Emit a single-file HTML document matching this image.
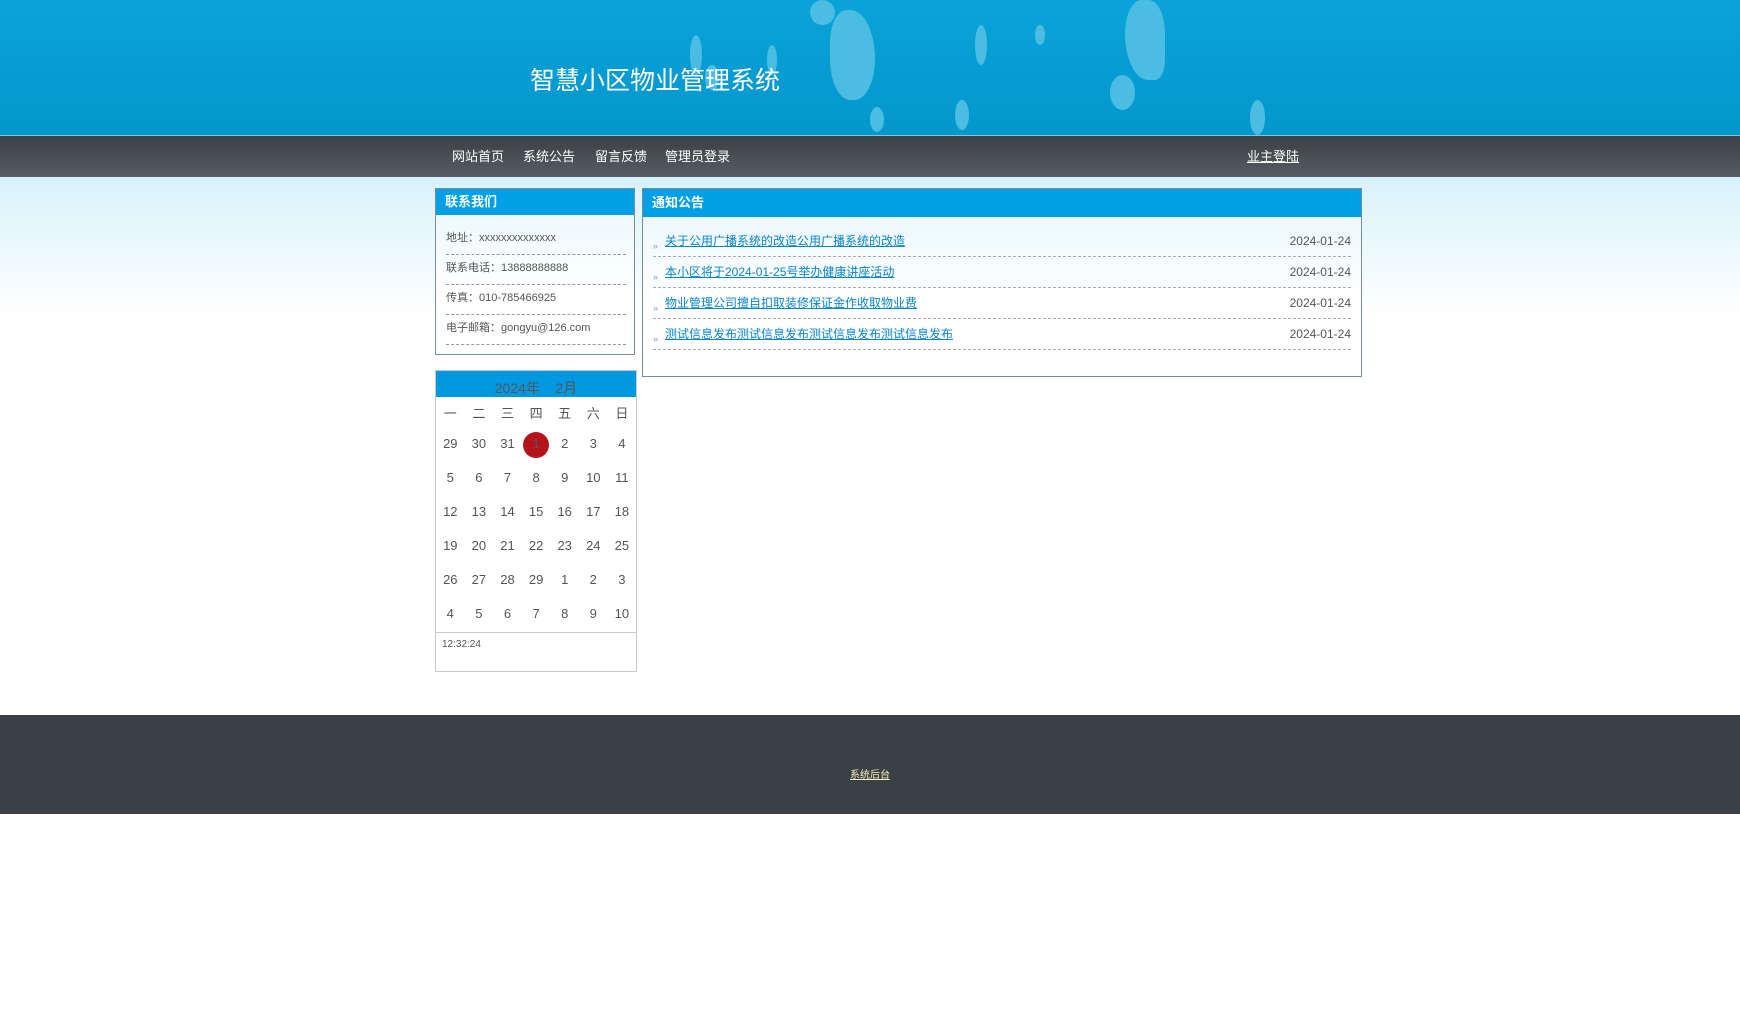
<!DOCTYPE html>
<html><head><meta charset="utf-8"><style>
*{margin:0;padding:0;box-sizing:border-box}
body{width:1740px;height:1020px;position:relative;background:#fff;font-family:"Liberation Sans","Noto Sans CJK SC",sans-serif;overflow:hidden}
.a{position:absolute}
#hd{left:0;top:0;width:1740px;height:135px;background:linear-gradient(#0aa3d8,#0497cc);overflow:hidden}
.blob{position:absolute;background:#4bbde2;border-radius:50%}
#title{left:530px;top:61px;font-size:25px;color:#fff;white-space:nowrap}
#nav{left:0;top:135px;width:1740px;height:42px;background:linear-gradient(#3b4045,#575c62);border-top:1px solid #7cc6e0}
.nv{top:10px;font-size:13px;color:#fff}
#bg{left:0;top:177px;width:1740px;height:140px;background:linear-gradient(#d8f2fb,#fff)}
.box{border:1px solid #7a8a99;background:linear-gradient(#e6f7fd,#fff 60%)}
.bh{background:#00a0e6;color:#fff;font-size:13px;font-weight:bold;padding-left:9px}
.ci{left:10px;width:180px;font-size:11px;color:#555;border-bottom:1px dashed #999;height:30px;line-height:26px}
.nr{left:10px;width:698px;height:31px;border-bottom:1px dashed #aaa;font-size:12px;line-height:20px}
.nr a{color:#0a84c9;text-decoration:underline;position:absolute;left:12px;top:5px}
.nr i{position:absolute;left:0;top:10px;font-style:normal;color:#9a8fc0;font-size:9px}
.nr span{position:absolute;right:0;top:5px;color:#555}
#cal{left:435px;top:370px;width:202px;height:302px;border:1px solid #c8c8c8;background:#fff}
.cd{width:28.6px;text-align:center;font-size:13px;color:#555;position:absolute}
#ft{left:0;top:715px;width:1740px;height:99px;background:#3b4045}
</style></head><body>
<div id="hd" class="a">
<div class="blob" style="left:830px;top:10px;width:45px;height:90px;border-radius:40% 60% 50% 50%"></div>
<div class="blob" style="left:810px;top:0;width:25px;height:25px"></div>
<div class="blob" style="left:1125px;top:0;width:40px;height:80px;border-radius:50% 50% 30% 70%"></div>
<div class="blob" style="left:1110px;top:75px;width:25px;height:35px"></div>
<div class="blob" style="left:975px;top:25px;width:12px;height:40px"></div>
<div class="blob" style="left:690px;top:35px;width:12px;height:40px"></div>
<div class="blob" style="left:705px;top:65px;width:14px;height:25px"></div>
<div class="blob" style="left:767px;top:45px;width:10px;height:30px"></div>
<div class="blob" style="left:870px;top:107px;width:14px;height:25px"></div>
<div class="blob" style="left:955px;top:100px;width:14px;height:30px"></div>
<div class="blob" style="left:1035px;top:25px;width:10px;height:20px"></div>
<div class="blob" style="left:1250px;top:100px;width:15px;height:35px"></div>
</div>
<div id="title" class="a">智慧小区物业管理系统</div>
<div id="nav" class="a">
<div class="a nv" style="left:452px">网站首页</div>
<div class="a nv" style="left:523px">系统公告</div>
<div class="a nv" style="left:595px">留言反馈</div>
<div class="a nv" style="left:665px">管理员登录</div>
<div class="a nv" style="left:1247px;text-decoration:underline">业主登陆</div>
</div>
<div id="bg" class="a"></div>

<div class="a box" style="left:435px;top:188px;width:200px;height:167px">
<div class="bh" style="height:26px;line-height:25px">联系我们</div>
<div class="a ci" style="top:36px">地址：xxxxxxxxxxxxxx</div>
<div class="a ci" style="top:66px">联系电话：13888888888</div>
<div class="a ci" style="top:96px">传真：010-785466925</div>
<div class="a ci" style="top:126px">电子邮箱：gongyu@126.com</div>
</div>

<div class="a box" style="left:642px;top:188px;width:720px;height:189px">
<div class="bh" style="height:28px;line-height:27px">通知公告</div>
<div class="a nr" style="top:37px"><i>»</i><a>关于公用广播系统的改造公用广播系统的改造</a><span>2024-01-24</span></div>
<div class="a nr" style="top:68px"><i>»</i><a>本小区将于2024-01-25号举办健康讲座活动</a><span>2024-01-24</span></div>
<div class="a nr" style="top:99px"><i>»</i><a>物业管理公司擅自扣取装修保证金作收取物业费</a><span>2024-01-24</span></div>
<div class="a nr" style="top:130px"><i>»</i><a>测试信息发布测试信息发布测试信息发布测试信息发布</a><span>2024-01-24</span></div>
</div>

<div id="cal" class="a">
<div style="background:#0098e0;height:26px;text-align:center;color:#555;font-size:14px;line-height:34px;overflow:hidden">2024年&nbsp;&nbsp;&nbsp;&nbsp;2月</div>
<div class="a" style="left:87px;top:61px;width:26px;height:26px;border-radius:50%;background:#b5121b"></div>
<div id="g"></div>
<div class="a" style="left:0;top:261px;width:200px;border-top:1px solid #ccc"></div>
<div class="a" style="left:6px;top:268px;font-size:10px;color:#555">12:32:24</div>
</div>
<script>
var rows=[["一","二","三","四","五","六","日"],[29,30,31,1,2,3,4],[5,6,7,8,9,10,11],[12,13,14,15,16,17,18],[19,20,21,22,23,24,25],[26,27,28,29,1,2,3],[4,5,6,7,8,9,10]];
var tops=[32,65,99,133,167,201,235],h="";
rows.forEach(function(r,i){r.forEach(function(d,j){h+='<div class="cd" style="left:'+(j*28.6)+'px;top:'+tops[i]+'px">'+d+'</div>';});});
document.getElementById("g").innerHTML=h;
</script>

<div id="ft" class="a"><div class="a" style="left:850px;top:51px;font-size:10px;color:#f4f0c0;text-decoration:underline">系统后台</div></div>
</body></html>
